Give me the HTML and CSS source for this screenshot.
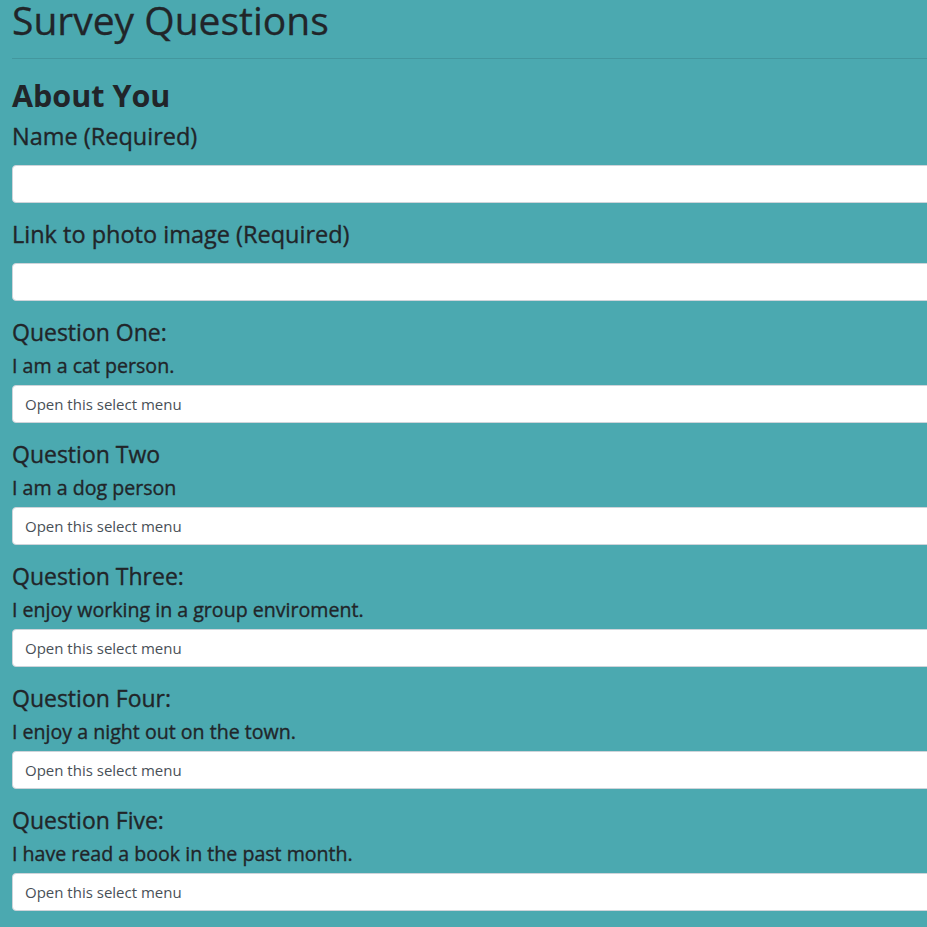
FILE: index.html
```html
<!DOCTYPE html>
<html lang="en">
<head>
<meta charset="utf-8">
<title>Survey Questions</title>
<link rel="stylesheet" href="styles.css">
</head>
<body>
<div class="page">
  <h1 class="title">Survey Questions</h1>
  <hr class="rule">
  <form class="survey">
    <h2 class="section">About You</h2>
    <div class="field">
      <label class="field-label" for="name">Name (Required)</label>
      <input class="input" id="name" type="text">
    </div>
    <div class="field">
      <label class="field-label" for="photo">Link to photo image (Required)</label>
      <input class="input" id="photo" type="text">
    </div>
    <div class="question">
      <h4 class="q-title">Question One:</h4>
      <h5 class="q-text">I am a cat person.</h5>
      <select class="select"><option>Open this select menu</option></select>
    </div>
    <div class="question">
      <h4 class="q-title">Question Two</h4>
      <h5 class="q-text">I am a dog person</h5>
      <select class="select"><option>Open this select menu</option></select>
    </div>
    <div class="question">
      <h4 class="q-title">Question Three:</h4>
      <h5 class="q-text">I enjoy working in a group enviroment.</h5>
      <select class="select"><option>Open this select menu</option></select>
    </div>
    <div class="question">
      <h4 class="q-title">Question Four:</h4>
      <h5 class="q-text">I enjoy a night out on the town.</h5>
      <select class="select"><option>Open this select menu</option></select>
    </div>
    <div class="question">
      <h4 class="q-title">Question Five:</h4>
      <h5 class="q-text">I have read a book in the past month.</h5>
      <select class="select"><option>Open this select menu</option></select>
    </div>
  </form>
</div>
</body>
</html>
```

FILE: styles.css
```css
html, body {
  margin: 0;
  padding: 0;
  overflow: hidden;
  background: #4ba9b0;
}

.page {
  width: 1100px;
  padding-left: 12px;
  font-family: "Open Sans", "Noto Sans", sans-serif;
  color: #212529;
}

.title {
  margin: 0;
  font-size: 39px;
  font-weight: 400;
  line-height: 40px;
  -webkit-text-stroke: 0.3px currentColor;
}

.rule {
  margin: 18px 0 0;
  border: 0;
  border-top: 1px solid rgba(0, 0, 0, 0.1);
  height: 0;
}

.survey {
  display: flex;
  flex-direction: column;
}

.section {
  margin: 17px 0 7px;
  font-size: 30.5px;
  font-weight: 700;
  line-height: 38px;
}

.field {
  display: flex;
  flex-direction: column;
  margin-bottom: 15.5px;
}

.field-label {
  font-size: 23.5px;
  font-weight: 400;
  line-height: 30px;
  margin-bottom: 14px;
  -webkit-text-stroke: 0.35px currentColor;
}

.input,
.select {
  box-sizing: border-box;
  width: 100%;
  height: 38px;
  margin: 0;
  padding: 0 12px;
  border: 1px solid #ced4da;
  border-radius: 4px;
  background: #fff;
  font-family: inherit;
  font-size: 15px;
  color: #495057;
  -webkit-appearance: none;
  appearance: none;
  outline: none;
}

.question {
  display: flex;
  flex-direction: column;
  margin-bottom: 15px;
}

.q-title {
  margin: 0 0 5px;
  font-size: 23px;
  font-weight: 400;
  line-height: 32px;
  -webkit-text-stroke: 0.35px currentColor;
}

.q-text {
  margin: 0 0 6px;
  font-size: 19.6px;
  font-weight: 400;
  line-height: 26px;
  -webkit-text-stroke: 0.35px currentColor;
}
```
